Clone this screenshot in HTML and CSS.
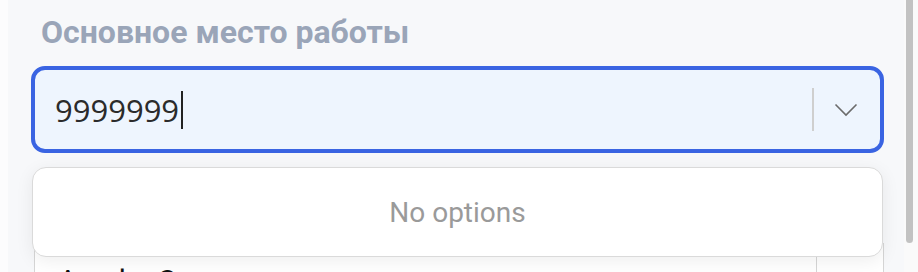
FILE: index.html
```html
<!DOCTYPE html>
<html lang="ru">
<head>
<meta charset="utf-8">
<title>Основное место работы</title>
<link rel="stylesheet" href="styles.css">
</head>
<body>
<div class="page">
  <div class="content">
    <div class="label">Основное место работы</div>
    <div class="field">
      <div class="value">9999999<span class="caret"></span></div>
      <div class="indicators">
        <span class="sep"></span>
        <span class="chevron">
          <svg width="24" height="14" viewBox="0 0 24 14"><path d="M1.5 1.5 L12 12 L22.5 1.5" fill="none" stroke="#6b6b6b" stroke-width="1.6"/></svg>
        </span>
      </div>
    </div>
    <div class="table">
      <div class="cell main">Альфа Страхование</div>
      <div class="cell side"></div>
    </div>
    <div class="menu">
      <div class="empty">No options</div>
    </div>
  </div>
  <div class="scroll"><div class="thumb"></div></div>
</div>
</body>
</html>
```

FILE: styles.css
```css
html, body {
  margin: 0;
  padding: 0;
  background: #fcfcfd;
}
.page {
  display: flex;
  height: 272px;
  overflow: hidden;
}
.content {
  position: relative;
  flex: 1;
  margin-left: 8px;
  background: #f7f8fa;
  padding: 0 20px 0 23px;
}
.label {
  font-family: Roboto, "Liberation Sans", sans-serif;
  font-weight: 700;
  font-size: 32px;
  line-height: 38px;
  color: #9aa5b8;
  padding-left: 10px;
  margin-top: 13px;
}
.field {
  margin-top: 15px;
  height: 87px;
  box-sizing: border-box;
  border: 4px solid #3a64e2;
  border-radius: 14px;
  background: #eef5fe;
  display: flex;
  align-items: center;
}
.value {
  flex: 1;
  display: flex;
  align-items: center;
  padding-left: 20px;
  font-family: "Open Sans", "Noto Sans", sans-serif;
  font-size: 31px;
  color: #2b2b2b;
}
.caret {
  display: inline-block;
  width: 2px;
  height: 38px;
  background: #222;
  margin-left: 2px;
}
.indicators {
  display: flex;
  align-items: center;
  padding-right: 22px;
}
.sep {
  width: 2px;
  height: 43px;
  background: #cfcfcf;
}
.chevron {
  display: flex;
  margin-left: 20px;
}
.table {
  margin-top: 90px;
  margin-left: 3px;
  height: 60px;
  background: #fff;
  border-left: 1px solid #d6d6d6;
  border-right: 1px solid #d6d6d6;
  display: flex;
}
.cell {
  font-family: Roboto, "Liberation Sans", sans-serif;
  font-size: 30px;
  color: #111;
}
.main {
  flex: 1;
  padding: 20px 0 0 23px;
  border-right: 1px solid #d6d6d6;
}
.side {
  width: 66px;
}
.menu {
  position: absolute;
  top: 167px;
  left: 24px;
  width: 851px;
  height: 90px;
  box-sizing: border-box;
  background: #fff;
  border: 1px solid #dadada;
  border-radius: 14px;
  box-shadow: 0 4px 18px rgba(0, 0, 0, 0.07);
  display: flex;
  align-items: center;
  justify-content: center;
}
.empty {
  font-family: Roboto, "Liberation Sans", sans-serif;
  font-size: 28px;
  color: #9a9a9a;
}
.scroll {
  width: 14px;
  background: #fafafa;
}
.thumb {
  margin-left: 2px;
  width: 7px;
  height: 243px;
  background: #c2c2c2;
  border-radius: 0 0 4px 4px;
}
```
